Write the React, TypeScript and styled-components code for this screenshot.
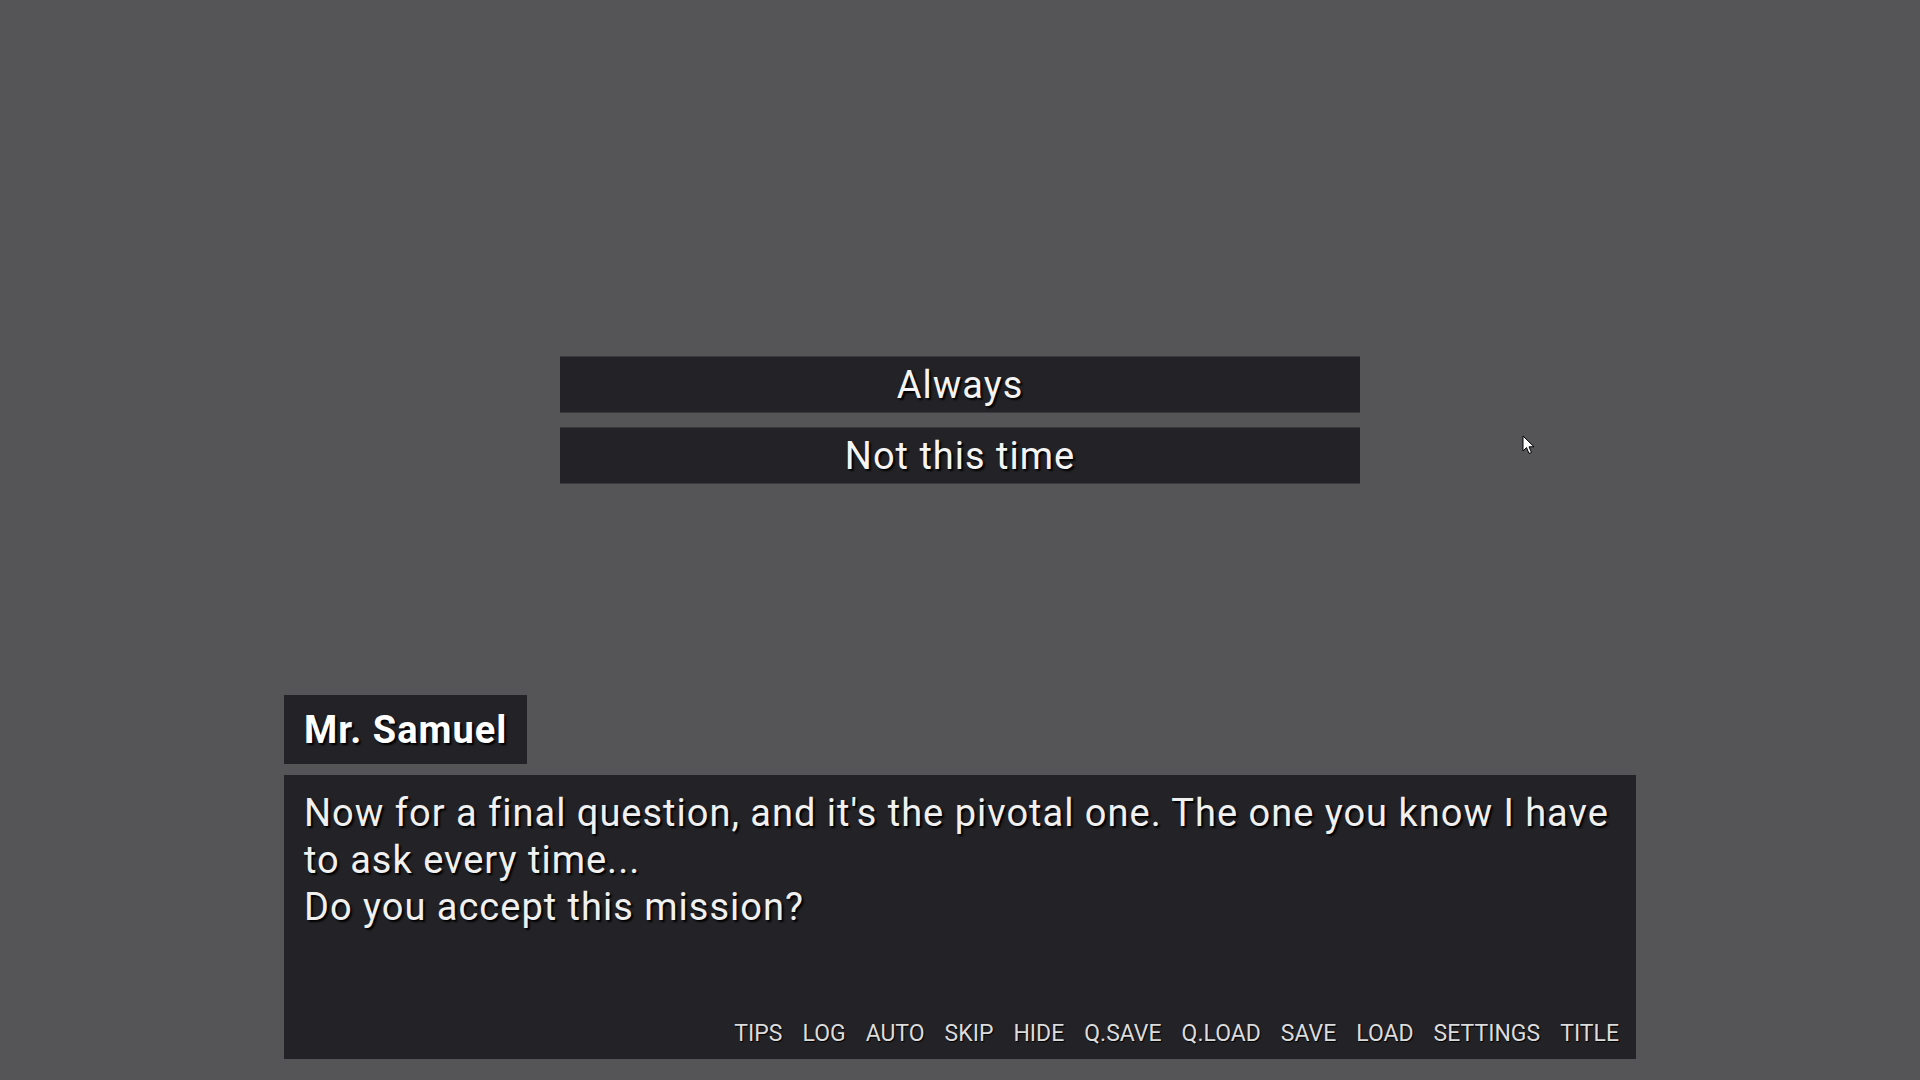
import styled, { createGlobalStyle } from 'styled-components';

const GlobalStyle = createGlobalStyle`
  html, body {
    margin: 0;
    padding: 0;
    background: #555558;
    font-family: Roboto, "Noto Sans", sans-serif;
    overflow: hidden;
  }
`;

const Screen = styled.div`
  position: relative;
  height: 100vh;
  display: flex;
  flex-direction: column;
  align-items: center;
  box-sizing: border-box;
  padding: 356px 0 21px;
`;

const ChoiceList = styled.div`
  display: flex;
  flex-direction: column;
  gap: 14px;
  width: 800px;
`;

const ChoiceButton = styled.button`
  height: 57px;
  background: #232226;
  border: none;
  border-top: 1px solid #3a393d;
  border-bottom: 1px solid #3a393d;
  color: #f4f4f4;
  font-family: Roboto, "Noto Sans", sans-serif;
  font-size: 38px;
  letter-spacing: 1px;
  text-shadow: 2px 2px 2px #000;
  cursor: pointer;
  padding: 0;
`;

const Spacer = styled.div`
  flex: 1;
`;

const DialogueArea = styled.div`
  width: 1352px;
  display: flex;
  flex-direction: column;
  gap: 11px;
`;

const NameTag = styled.div`
  align-self: flex-start;
  height: 69px;
  display: flex;
  align-items: center;
  padding: 0 20px;
  background: #232226;
  color: #fff;
  font-size: 38px;
  font-weight: 700;
  letter-spacing: 1px;
  text-shadow: 2px 2px 2px #000;
`;

const DialogueBox = styled.div`
  height: 284px;
  box-sizing: border-box;
  background: #232226;
  display: flex;
  flex-direction: column;
  padding: 15px 17px 12px 20px;
`;

const DialogueText = styled.div`
  flex: 1;
  color: #f0f0f0;
  font-size: 38px;
  letter-spacing: 1px;
  line-height: 47px;
  text-shadow: 2px 2px 2px #000;
`;

const QuickMenu = styled.div`
  display: flex;
  justify-content: flex-end;
  gap: 20px;
`;

const MenuItem = styled.span`
  color: #dcdcdc;
  font-size: 23px;
  text-shadow: 1px 1px 1px #000;
  cursor: pointer;
`;

const Cursor = styled.svg`
  position: absolute;
  left: 1522px;
  top: 435px;
`;

const menu = ['TIPS', 'LOG', 'AUTO', 'SKIP', 'HIDE', 'Q.SAVE', 'Q.LOAD', 'SAVE', 'LOAD', 'SETTINGS', 'TITLE'];

const App: React.FC = () => {
  return (
    <>
      <GlobalStyle />
      <Screen>
        <ChoiceList>
          <ChoiceButton>Always</ChoiceButton>
          <ChoiceButton>Not this time</ChoiceButton>
        </ChoiceList>
        <Spacer />
        <DialogueArea>
          <NameTag>Mr. Samuel</NameTag>
          <DialogueBox>
            <DialogueText>
              Now for a final question, and it's the pivotal one. The one you know I have to ask every time...
              <br />
              Do you accept this mission?
            </DialogueText>
            <QuickMenu>
              {menu.map((m) => (
                <MenuItem key={m}>{m}</MenuItem>
              ))}
            </QuickMenu>
          </DialogueBox>
        </DialogueArea>
        <Cursor width="14" height="22" viewBox="0 0 14 22">
          <path d="M1 1 L1 16 L4.5 12.5 L7 18.5 L9.5 17.5 L7 11.8 L12 11.8 Z" fill="#fff" stroke="#000" strokeWidth="1" />
        </Cursor>
      </Screen>
    </>
  );
};

export default App;
